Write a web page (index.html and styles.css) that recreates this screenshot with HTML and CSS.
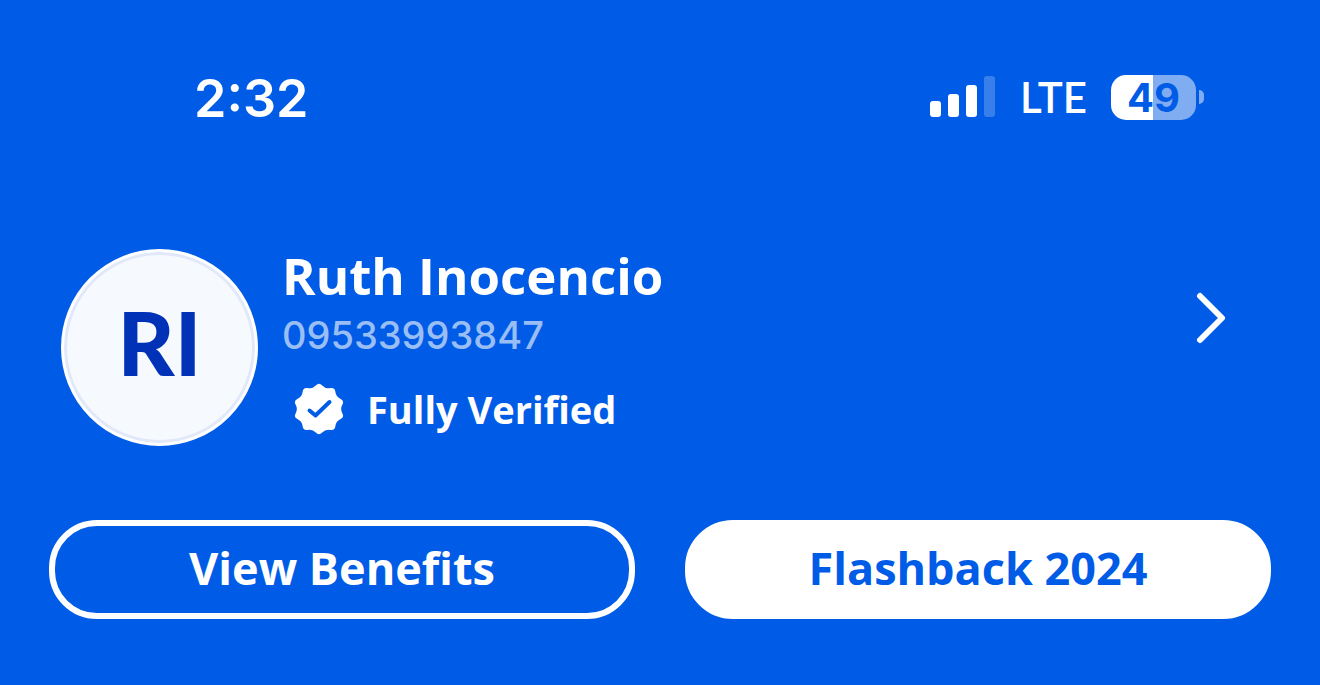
FILE: index.html
```html
<!DOCTYPE html>
<html lang="en">
  <head>
    <meta charset="UTF-8" />
    <meta name="viewport" content="width=device-width, initial-scale=1.0" />
    <title>Profile</title>
    <link rel="stylesheet" href="styles.css">
  </head>
  <body>
    <header class="status-bar">
      <time class="clock">2:32</time>
      <div class="status-icons">
        <svg class="signal" viewBox="0 0 66 42" aria-hidden="true">
          <rect x="0" y="25" width="11" height="16" rx="3" />
          <rect x="18" y="18" width="11" height="23" rx="3" />
          <rect x="36" y="9" width="11" height="32" rx="3" />
          <rect class="signal-off" x="54" y="0" width="11" height="41" rx="3" />
        </svg>
        <span class="network">LTE</span>
        <div class="battery">
          <span class="battery-level">49</span>
          <span class="battery-tip"></span>
        </div>
      </div>
    </header>

    <main class="profile">
      <section class="user">
        <div class="avatar">RI</div>
        <div class="user-info">
          <h1 class="user-name">Ruth Inocencio</h1>
          <p class="user-phone">09533993847</p>
          <p class="user-status">
            <svg class="badge" viewBox="-26 -26 52 52" aria-hidden="true">
              <path
                class="badge-shape"
                d="M-3.2-23.5Q0-27 3.2-23.5Q6.5-20 11.2-20.9Q15.9-21.8 16.4-17Q17-12.3 21.3-10.3Q25.7-8.3 23.3-4.2Q21 0 23.3 4.2Q25.7 8.3 21.3 10.3Q17 12.3 16.4 17Q15.9 21.8 11.2 20.9Q6.5 20 3.2 23.5Q0 27-3.2 23.5Q-6.5 20-11.2 20.9Q-15.9 21.8-16.4 17Q-17 12.3-21.3 10.3Q-25.7 8.3-23.3 4.2Q-21 0-23.3-4.2Q-25.7-8.3-21.3-10.3Q-17-12.3-16.4-17Q-15.9-21.8-11.2-20.9Q-6.5-20-3.2-23.5Z"
              />
              <path class="badge-check" d="M-9.5 1.5L-3.5 6.5L10.5-7" />
            </svg>
            <span>Fully Verified</span>
          </p>
        </div>
        <button class="open-profile" type="button" aria-label="Open profile">
          <svg class="chevron" viewBox="0 0 30 52" aria-hidden="true">
            <path d="M4 4L26 26L4 48" />
          </svg>
        </button>
      </section>

      <div class="actions">
        <button class="btn btn-outline" type="button">View Benefits</button>
        <button class="btn btn-solid" type="button">Flashback 2024</button>
      </div>
    </main>
  </body>
</html>
```
FILE: styles.css
```css
* {
  box-sizing: border-box;
}

body {
  margin: 0;
  background-color: #005ce6;
  color: #fff;
  font-family: "Open Sans", sans-serif;
}

/* Status bar */
.status-bar {
  display: flex;
  justify-content: space-between;
  align-items: flex-start;
  padding: 67px 116px 0 194px;
  font-family: "Inter", sans-serif;
}

.clock {
  font-size: 52px;
  line-height: 64px;
  font-weight: 600;
}

.status-icons {
  display: flex;
  align-items: center;
  gap: 24px;
}

.signal {
  width: 66px;
  height: 42px;
  fill: #fff;
}

.signal-off {
  opacity: 0.22;
}

.network {
  font-family: "Lato", sans-serif;
  font-size: 42px;
  line-height: 60px;
  font-weight: 600;
}

.battery {
  display: flex;
  align-items: center;
  gap: 3px;
}

.battery-level {
  width: 85px;
  border-radius: 15px;
  background: linear-gradient(to right, #fff 49%, #80adf2 49%);
  color: #005ce6;
  font-size: 40px;
  line-height: 45px;
  font-weight: 700;
  text-align: center;
}

.battery-tip {
  width: 5px;
  height: 14px;
  border-radius: 0 5px 5px 0;
  background-color: #80adf2;
}

/* Profile */
.profile {
  padding: 118px 49px 66px;
}

.user {
  display: flex;
  align-items: flex-start;
  padding: 0 45px 0 12px;
}

.avatar {
  flex: none;
  width: 197px;
  height: 197px;
  border: 3px solid #fff;
  border-radius: 50%;
  background-color: #f6f9fe;
  box-shadow: inset 0 0 0 3px #e0e8f9;
  color: #0032b8;
  font-family: "Lato", sans-serif;
  font-size: 88px;
  line-height: 180px;
  font-weight: 900;
  text-align: center;
}

.user-info {
  flex: 1;
  padding-left: 24px;
}

.user-name,
.user-phone,
.user-status {
  margin: 0;
}

.user-name {
  font-size: 51px;
  line-height: 52px;
  font-weight: 700;
}

.user-phone {
  color: #99bef5;
  font-family: "Inter", sans-serif;
  font-size: 38px;
  line-height: 68px;
  font-weight: 500;
}

.user-status {
  display: flex;
  align-items: center;
  gap: 22px;
  padding: 10px 0 0 11px;
  font-size: 38px;
  line-height: 60px;
  font-weight: 700;
}

.badge {
  width: 52px;
  height: 52px;
}

.badge-shape {
  fill: #fff;
}

.badge-check {
  fill: none;
  stroke: #005ce6;
  stroke-width: 4;
  stroke-linecap: round;
  stroke-linejoin: round;
}

.open-profile {
  padding: 43px 0;
  border: none;
  background: none;
  cursor: pointer;
}

.chevron {
  display: block;
  width: 30px;
  height: 52px;
  fill: none;
  stroke: #fff;
  stroke-width: 6;
  stroke-linecap: round;
  stroke-linejoin: round;
}

.actions {
  display: grid;
  grid-template-columns: 1fr 1fr;
  gap: 50px;
  margin-top: 74px;
}

.btn {
  height: 99px;
  padding: 0 24px 4px;
  border: 6px solid #fff;
  border-radius: 48px;
  font-family: inherit;
  font-size: 45px;
  font-weight: 700;
  cursor: pointer;
}

.btn-outline {
  background-color: transparent;
  color: #fff;
}

.btn-solid {
  background-color: #fff;
  color: #005ce6;
}
```
